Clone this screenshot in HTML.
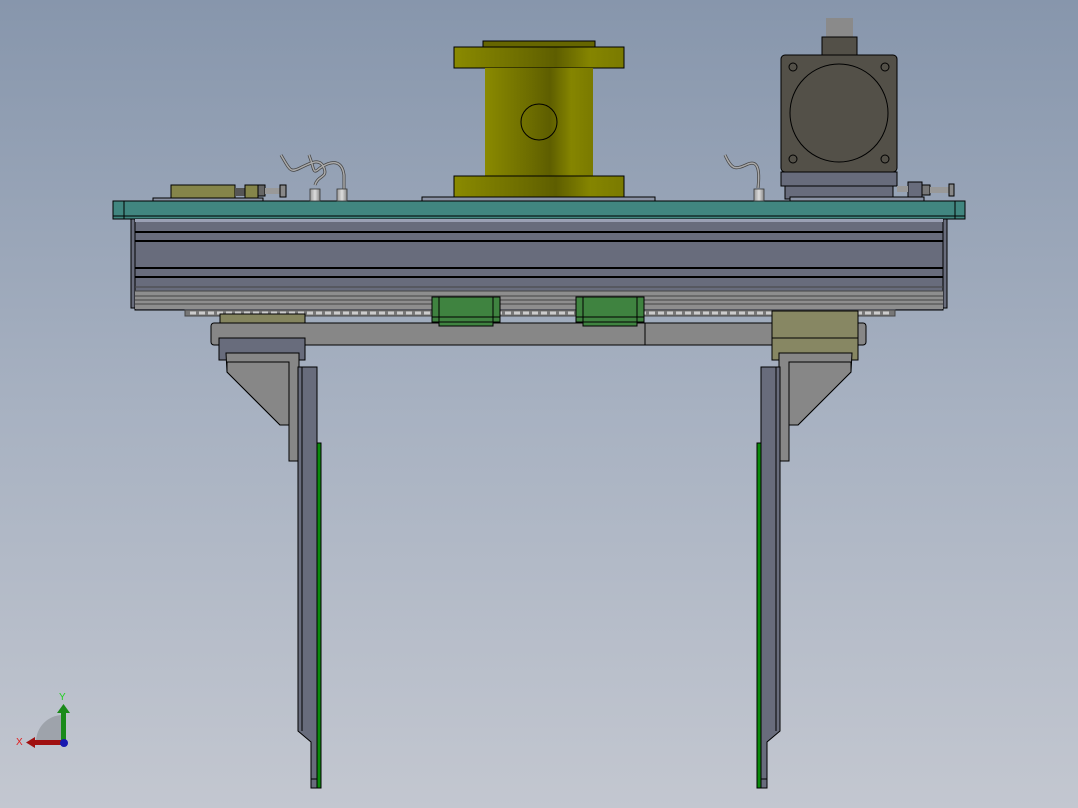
<!DOCTYPE html>
<html><head><meta charset="utf-8"><style>
html,body{margin:0;padding:0;width:1078px;height:808px;overflow:hidden}
</style></head><body>
<svg width="1078" height="808" viewBox="0 0 1078 808" xmlns="http://www.w3.org/2000/svg">
<defs>
<linearGradient id="bg" x1="0" y1="0" x2="0" y2="1">
<stop offset="0" stop-color="#8796ac"/><stop offset="0.5" stop-color="#a7b1c1"/><stop offset="1" stop-color="#c3c7d0"/>
</linearGradient>
<linearGradient id="yel" x1="0" y1="0" x2="1" y2="0">
<stop offset="0" stop-color="#8a8a00"/><stop offset="0.45" stop-color="#6a6a00"/><stop offset="0.6" stop-color="#5e5e00"/><stop offset="0.8" stop-color="#858500"/><stop offset="1" stop-color="#7a7a00"/>
</linearGradient>
<linearGradient id="cab" x1="0" y1="0" x2="1" y2="0">
<stop offset="0" stop-color="#999"/><stop offset="0.5" stop-color="#ddd"/><stop offset="1" stop-color="#888"/>
</linearGradient>
</defs>
<rect width="1078" height="808" fill="url(#bg)"/>
<g stroke="#000" stroke-width="1">
<rect x="483" y="41" width="112" height="6" fill="#666600"/>
<rect x="454" y="47" width="170" height="21" fill="url(#yel)"/>
<rect x="485" y="68" width="108" height="108" fill="url(#yel)" stroke="none"/>
<circle cx="539" cy="122" r="18" fill="none"/>
<rect x="454" y="176" width="170" height="21" fill="url(#yel)"/>
<rect x="422" y="197" width="233" height="4" fill="#8b93a5"/>
<rect x="826" y="18" width="27" height="20" fill="#8a8a8a" stroke="none"/>
<rect x="822" y="37" width="35" height="18" fill="#535048"/>
<rect x="781" y="55" width="116" height="117" rx="4" fill="#535048"/>
<circle cx="839" cy="113" r="49" fill="#535048"/>
<g fill="none"><circle cx="793" cy="67" r="4"/><circle cx="885" cy="67" r="4"/><circle cx="793" cy="159" r="4"/><circle cx="885" cy="159" r="4"/></g>
<rect x="781" y="172" width="116" height="14" fill="#686c7c"/>
<rect x="785" y="186" width="108" height="13" fill="#686c7c"/>
<rect x="908" y="182" width="14" height="15" fill="#686c7c"/>
<rect x="922" y="185" width="8" height="10" fill="#777"/>
<rect x="930" y="187" width="22" height="6" fill="#999" stroke="none"/>
<rect x="949" y="184" width="5" height="12" fill="#888"/>
<rect x="897" y="186" width="11" height="6" fill="#999" stroke="none"/>
<rect x="790" y="197" width="134" height="4" fill="#8b93a5"/>
<rect x="171" y="185" width="64" height="14" fill="#85854a"/>
<rect x="235" y="188" width="10" height="8" fill="#555" stroke="none"/>
<rect x="245" y="185" width="13" height="14" fill="#85854a"/>
<rect x="258" y="185" width="7" height="11" fill="#666"/>
<rect x="265" y="188" width="18" height="6" fill="#999" stroke="none"/>
<rect x="280" y="185" width="6" height="12" fill="#888"/>
<rect x="153" y="198" width="110" height="3" fill="#8b93a5"/>
<rect x="113" y="201" width="852" height="18" fill="#418680"/>
<line x1="124" y1="201" x2="124" y2="219"/><line x1="955" y1="201" x2="955" y2="219"/>
<line x1="113" y1="216" x2="965" y2="216"/>
<rect x="131" y="219" width="4" height="89" fill="#686c7c"/>
<rect x="943" y="219" width="4" height="89" fill="#686c7c"/>
<rect x="135" y="219" width="808" height="91" fill="#686c7c"/>
<rect x="135" y="219" width="808" height="3" fill="#9aa0b4" stroke="none"/>
<g stroke-width="2"><line x1="135" y1="232" x2="943" y2="232"/><line x1="135" y1="241" x2="943" y2="241"/><line x1="135" y1="268" x2="943" y2="268"/><line x1="135" y1="277" x2="943" y2="277"/></g>
<rect x="135" y="291" width="808" height="18" fill="#8e8e8e" stroke="none"/>
<g stroke="#444"><line x1="135" y1="287" x2="943" y2="287"/><line x1="135" y1="291" x2="943" y2="291"/><line x1="135" y1="296" x2="943" y2="296"/><line x1="135" y1="300" x2="943" y2="300"/><line x1="135" y1="304" x2="943" y2="304"/></g>
<line x1="135" y1="310" x2="943" y2="310"/>
<rect x="185" y="310" width="710" height="6" fill="#777" stroke="#444"/>
<line x1="190" y1="313" x2="890" y2="313" stroke="#ccc" stroke-width="3" stroke-dasharray="6 3"/>
<rect x="211" y="323" width="655" height="22" rx="3" fill="#878787"/>
<line x1="645" y1="323" x2="645" y2="345"/>
<rect x="220" y="314" width="85" height="9" fill="#85855f"/>
<rect x="219" y="338" width="86" height="22" fill="#686c7c"/>
<rect x="772" y="311" width="86" height="49" fill="#878763"/>
<line x1="772" y1="338" x2="858" y2="338"/>
<rect x="432" y="297" width="68" height="25" fill="#3f8340"/>
<rect x="439" y="322" width="54" height="4" fill="#3f8340"/>
<line x1="439" y1="297" x2="439" y2="322"/><line x1="493" y1="297" x2="493" y2="322"/><line x1="432" y1="317" x2="500" y2="317"/>
<rect x="576" y="297" width="68" height="25" fill="#3f8340"/>
<rect x="583" y="322" width="54" height="4" fill="#3f8340"/>
<line x1="583" y1="297" x2="583" y2="322"/><line x1="637" y1="297" x2="637" y2="322"/><line x1="576" y1="317" x2="644" y2="317"/>
<g>
<path d="M226 353H299V461H289V425H280L227 372Z" fill="#878787"/>
<path d="M227 362H289V425H280L227 372Z" fill="#878787"/>
<path d="M298 367H317V788H311V742L298 731Z" fill="#686c7c"/>
<line x1="302" y1="367" x2="302" y2="731"/><line x1="311" y1="742" x2="311" y2="788"/>
<line x1="311" y1="779" x2="321" y2="779"/>
<rect x="317" y="443" width="4" height="345" fill="#0a8a0a"/>
</g>
<g transform="translate(1078,0) scale(-1,1)">
<path d="M226 353H299V461H289V425H280L227 372Z" fill="#878787"/>
<path d="M227 362H289V425H280L227 372Z" fill="#878787"/>
<path d="M298 367H317V788H311V742L298 731Z" fill="#686c7c"/>
<line x1="302" y1="367" x2="302" y2="731"/><line x1="311" y1="742" x2="311" y2="788"/>
<line x1="311" y1="779" x2="321" y2="779"/>
<rect x="317" y="443" width="4" height="345" fill="#0a8a0a"/>
</g>
</g>
<g fill="none" stroke="#444" stroke-width="3">
<path d="M281 155C290 170 290 173 300 168C312 162 320 158 324 168C328 178 318 175 315 185"/>
<path d="M309 155C315 170 312 175 320 168C332 160 342 160 344 175V190"/>
<path d="M725 155C732 170 735 170 748 164C758 160 760 170 758 188"/>
</g>
<g fill="none" stroke="#aaa" stroke-width="1.5">
<path d="M281 155C290 170 290 173 300 168C312 162 320 158 324 168C328 178 318 175 315 185"/>
<path d="M309 155C315 170 312 175 320 168C332 160 342 160 344 175V190"/>
<path d="M725 155C732 170 735 170 748 164C758 160 760 170 758 188"/>
</g>
<g fill="url(#cab)" stroke="#333" stroke-width="0.8">
<rect x="310" y="189" width="10" height="12"/><rect x="337" y="189" width="10" height="12"/><rect x="754" y="189" width="10" height="12"/>
</g>
<path d="M36 742A27 27 0 0 1 63 715V742Z" fill="#9ea3ab"/>
<rect x="61" y="712" width="5" height="30" fill="#1a8a1a"/>
<path d="M57 713L63.5 704L70 713Z" fill="#1a8a1a"/>
<rect x="34" y="740" width="30" height="5" fill="#a01010"/>
<path d="M35 737L26 742.5L35 748Z" fill="#a01010"/>
<circle cx="64" cy="743" r="4" fill="#1818b0"/>
<text x="59" y="700" font-family="Liberation Sans, sans-serif" font-size="10" fill="#20d020">Y</text>
<text x="16" y="745" font-family="Liberation Sans, sans-serif" font-size="10" fill="#e02020">X</text>
</svg>
</body></html>
